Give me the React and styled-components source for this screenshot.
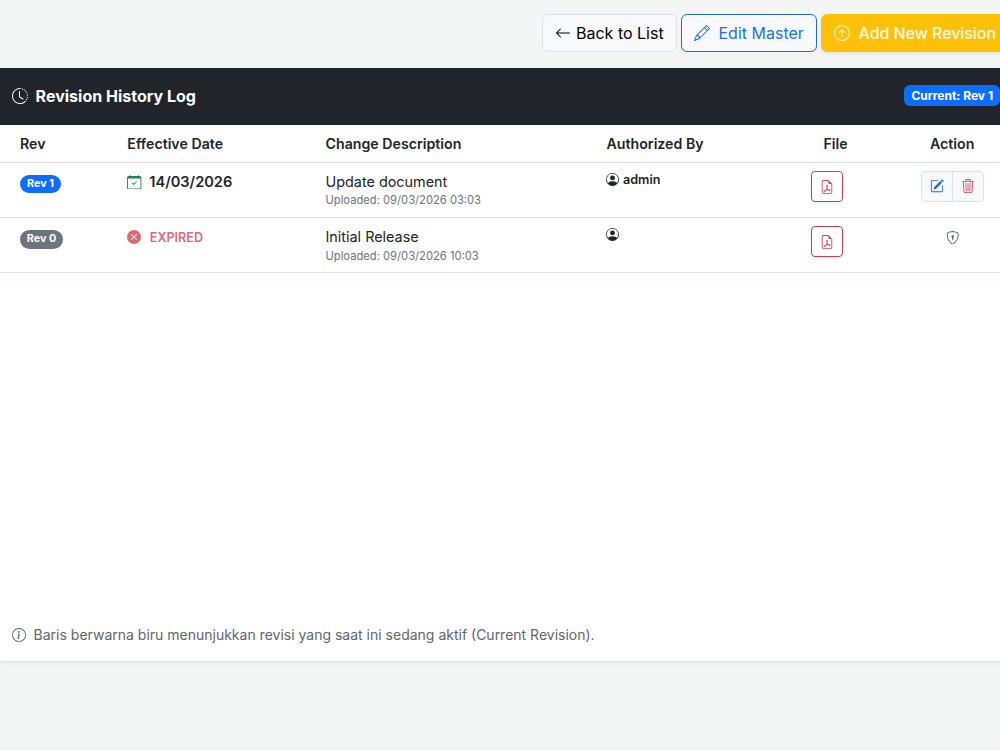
import React from 'react';
import styled, { createGlobalStyle } from 'styled-components';
import {
  BsArrowLeft, BsPencil, BsArrowUpCircle, BsClockHistory, BsCalendarCheck,
  BsXCircleFill, BsPersonCircle, BsFileEarmarkPdf, BsPencilSquare, BsTrash3,
  BsShieldLock, BsInfoCircle,
} from 'react-icons/bs';

const GlobalStyle = createGlobalStyle`
  *, *::before, *::after { box-sizing: border-box; }
  html, body { margin: 0; padding: 0; }
  body {
    background: #f4f6f6;
    color: #212529;
    font-family: Inter, "Liberation Sans", sans-serif;
    font-size: 16px;
    line-height: 1.5;
    overflow: hidden;
  }
  svg { display: block; flex: none; }
`;

const Page = styled.div`
  width: 1012px;
  height: 750px;
`;

const Toolbar = styled.header`
  display: flex;
  gap: 4px;
  padding: 14px 0 16px 542px;
`;

const tones = {
  light: { color: '#000', border: '#dfe2e6', background: '#f8f9fa' },
  outline: { color: '#1f6ef0', border: '#2469cd', background: '#f8f9fa' },
  warning: { color: '#fff8e4', border: '#ffc107', background: '#ffc107' },
};

const Button = styled.button`
  display: flex;
  align-items: center;
  flex: none;
  width: ${(p) => p.$width}px;
  height: 38px;
  padding: 0 0 0 12px;
  gap: ${(p) => p.$gap}px;
  border: 1px solid ${(p) => tones[p.$tone].border};
  border-radius: 6px;
  background: ${(p) => tones[p.$tone].background};
  color: ${(p) => tones[p.$tone].color};
  box-shadow: ${(p) => (p.$tone === 'warning' ? '0 2px 4px rgba(0, 0, 0, 0.075)' : 'none')};
  font: inherit;
  font-weight: ${(p) => (p.$tone === 'warning' ? 500 : 400)};
  letter-spacing: ${(p) => (p.$tone === 'warning' ? '-0.06px' : 'normal')};
  white-space: nowrap;
`;

const Card = styled.main`
  display: flex;
  flex-direction: column;
  height: 593px;
  background: #fff;
  box-shadow: 0 2px 4px rgba(0, 0, 0, 0.075);
`;

const CardHeader = styled.div`
  display: flex;
  align-items: center;
  justify-content: space-between;
  height: 57px;
  padding: 0 12px;
  background: #212529;
  color: #fff;
`;

const Title = styled.h1`
  display: flex;
  align-items: center;
  gap: 7.6px;
  margin: 0;
  font-size: 16px;
  font-weight: 700;
  line-height: 25px;
  svg { margin-bottom: 2px; }
`;

const CurrentBadge = styled.span`
  display: flex;
  align-items: center;
  justify-content: center;
  width: 96px;
  height: 21px;
  margin-bottom: 2px;
  padding-left: 0.5px;
  border-radius: 6px;
  background: #0d6efd;
  font-size: 12px;
  font-weight: 700;
  white-space: nowrap;
`;

const Row = styled.div`
  display: grid;
  grid-template-columns: 107.3px 198.2px 281px 174.5px 149px 102px;
  height: ${(p) => p.$height}px;
  padding-left: 20px;
  border-bottom: 1px solid #dee2e6;
  font-size: 14.4px;
`;

const HeadCell = styled.div`
  padding: 8px 0;
  padding-left: ${(p) => p.$indent || 0}px;
  font-weight: 600;
  font-size: 14.2px;
  line-height: 22px;
`;

const Cell = styled.div`
  padding-top: ${(p) => p.$top}px;
  margin-left: ${(p) => p.$indent || 0}px;
`;

const RevBadge = styled.span`
  display: flex;
  align-items: center;
  justify-content: center;
  width: ${(p) => (p.$active ? 41 : 43)}px;
  height: ${(p) => (p.$active ? 18 : 19)}px;
  padding-bottom: ${(p) => (p.$active ? 0 : 1)}px;
  border-radius: 10px;
  background: ${(p) => (p.$active ? '#0d6efd' : '#6c757d')};
  color: #fff;
  font-size: 10.8px;
  font-weight: 700;
`;

const EffectiveDate = styled.div`
  display: flex;
  align-items: center;
  gap: 7.6px;
  font-size: 14.6px;
  font-weight: 600;
  height: 22px;
  svg { color: #198754; }
  span { padding-top: 1px; }
`;

const Expired = styled(EffectiveDate)`
  color: #e4667a;
  font-size: 12.6px;
  gap: 8.5px;
  svg { color: #e06673; }
  span { padding-top: 2px; }
`;

const Description = styled.div`
  height: 20px;
  line-height: 22px;
`;

const Uploaded = styled.div`
  padding-top: ${(p) => p.$shift}px;
  color: #6c757d;
  font-size: 11.2px;
  line-height: 19px;
`;

const Author = styled.div`
  display: flex;
  align-items: center;
  gap: 3.5px;
  height: 19px;
  font-size: 12.6px;
  font-weight: 600;
  span { padding-top: 1px; }
`;

const FileButton = styled.button`
  display: grid;
  place-items: center;
  width: 32px;
  height: 31px;
  padding: 0;
  border: 1px solid #cc3c50;
  border-radius: 4px;
  background: #fff;
  color: #d43f4e;
  box-shadow: 0 2px 4px rgba(0, 0, 0, 0.06);
`;

const ActionGroup = styled.div`
  display: grid;
  grid-template-columns: 1fr 1fr;
  width: 63px;
  height: 31px;
  border: 1px solid #dee2e6;
  border-radius: 4px;
  background: #f8f9fa;
`;

const ActionButton = styled.button`
  display: grid;
  place-items: center;
  padding: 0 0 1px;
  border: 0;
  background: none;
  color: ${(p) => (p.$danger ? '#dc3f4e' : '#1a6fe8')};
  & + & { border-left: 1px solid #dee2e6; }
`;

const LockMark = styled.div`
  padding-left: 25px;
  color: #555c63;
`;

const CardFooter = styled.footer`
  display: flex;
  align-items: center;
  gap: 7.6px;
  height: 52px;
  margin-top: auto;
  padding: 0 12px 1px;
  color: #5f666d;
  font-size: 14px;
`;

const revisions = [
  { rev: 1, date: '14/03/2026', description: 'Update document', uploaded: '09/03/2026 03:03', author: 'admin', active: true },
  { rev: 0, description: 'Initial Release', uploaded: '09/03/2026 10:03', author: '' },
];

function RevisionRow({ item }) {
  return (
    <Row $height={55}>
      <Cell $top={12}><RevBadge $active={item.active}>Rev {item.rev}</RevBadge></Cell>
      <Cell $top={8}>
        {item.active
          ? <EffectiveDate><BsCalendarCheck size={14.4} /><span>{item.date}</span></EffectiveDate>
          : <Expired><BsXCircleFill size={14} /><span>EXPIRED</span></Expired>}
      </Cell>
      <Cell $top={8}>
        <Description>{item.description}</Description>
        <Uploaded $shift={item.active ? 0 : 1}>Uploaded: {item.uploaded}</Uploaded>
      </Cell>
      <Cell $top={7}><Author><BsPersonCircle size={13} /><span>{item.author}</span></Author></Cell>
      <Cell $top={8} $indent={30}>
        <FileButton aria-label="Open PDF"><BsFileEarmarkPdf size={14} /></FileButton>
      </Cell>
      <Cell $top={item.active ? 8 : 13} $indent={-9}>
        {item.active ? (
          <ActionGroup>
            <ActionButton aria-label="Edit"><BsPencilSquare size={14} /></ActionButton>
            <ActionButton aria-label="Delete" $danger><BsTrash3 size={14} /></ActionButton>
          </ActionGroup>
        ) : <LockMark><BsShieldLock size={13.4} /></LockMark>}
      </Cell>
    </Row>
  );
}

export default function App() {
  return (
    <>
      <GlobalStyle />
      <Page>
        <Toolbar>
          <Button $tone="light" $width={135} $gap={5}><BsArrowLeft size={16} />Back to List</Button>
          <Button $tone="outline" $width={136} $gap={8.5}><BsPencil size={16} />Edit Master</Button>
          <Button $tone="warning" $width={191} $gap={8.5}><BsArrowUpCircle size={16} />Add New Revision</Button>
        </Toolbar>
        <Card>
          <CardHeader>
            <Title><BsClockHistory size={16} />Revision History Log</Title>
            <CurrentBadge>Current: Rev 1</CurrentBadge>
          </CardHeader>
          <Row $height={38}>
            <HeadCell>Rev</HeadCell>
            <HeadCell>Effective Date</HeadCell>
            <HeadCell>Change Description</HeadCell>
            <HeadCell>Authorized By</HeadCell>
            <HeadCell $indent={42.5}>File</HeadCell>
            <HeadCell>Action</HeadCell>
          </Row>
          {revisions.map((item) => <RevisionRow key={item.rev} item={item} />)}
          <CardFooter><BsInfoCircle size={14} />Baris berwarna biru menunjukkan revisi yang saat ini sedang aktif (Current Revision).</CardFooter>
        </Card>
      </Page>
    </>
  );
}
